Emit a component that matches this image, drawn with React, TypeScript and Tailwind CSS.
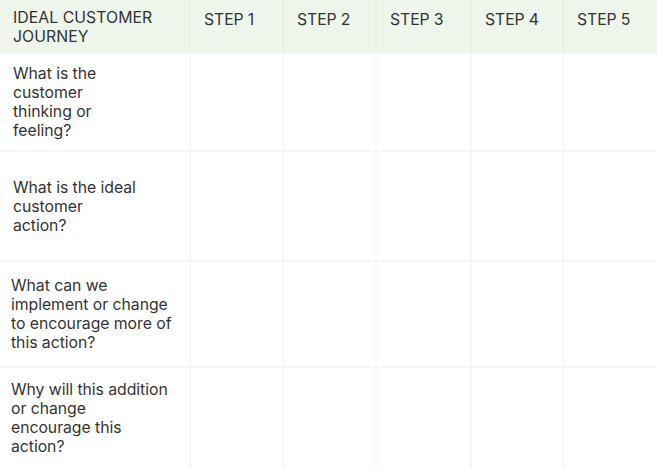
const steps = ['STEP 1', 'STEP 2', 'STEP 3', 'STEP 4', 'STEP 5']

const rows = [
  { q: ['What is the', 'customer', 'thinking or', 'feeling?'], h: 'h-[98px]', pad: 'pl-[13px]' },
  { q: ['What is the ideal', 'customer', 'action?'], h: 'h-[110px]', pad: 'pl-[13px]' },
  { q: ['What can we', 'implement or change', 'to encourage more of', 'this action?'], h: 'h-[106px]', pad: 'pl-[11px]' },
  { q: ['Why will this addition', 'or change', 'encourage this', 'action?'], h: 'h-[102px]', pad: 'pl-[11px]' },
]

const cols = 'grid grid-cols-[191px_93px_93px_95px_92px_1fr]'

export default function App() {
  return (
    <div className="w-[657px] h-[468px] overflow-hidden bg-white text-[#333333] font-['Inter',sans-serif] text-[15.8px] leading-[19px] tracking-[-0.05px]">
      {/* Header */}
      <div className={`${cols} h-[52px] bg-[#eef6ec]`}>
        <div className="border-r-2 border-[#e8f0e5] pl-[13px] pt-[8px] tracking-[0.05px]">
          <div>IDEAL CUSTOMER</div>
          <div>JOURNEY</div>
        </div>
        {steps.map((s, i) => (
          <div
            key={s}
            className={`pt-[10px] pl-[13px] tracking-[-0.1px] ${i < 4 ? 'border-r-2 border-[#e8f0e5]' : ''}`}
          >
            {s}
          </div>
        ))}
      </div>

      {/* Body */}
      {rows.map((r, ri) => (
        <div key={ri} className={`${cols} ${r.h} border-t-2 border-[#f4f6f2]`}>
          <div className={`flex flex-col justify-center border-r-2 border-[#f4f7f2] ${r.pad}`}>
            {r.q.map((l) => (
              <div key={l} className="whitespace-nowrap">{l}</div>
            ))}
          </div>
          {steps.map((s, i) => (
            <div key={s} className={i < 4 ? 'border-r-2 border-[#f4f7f2]' : ''} />
          ))}
        </div>
      ))}
    </div>
  )
}
